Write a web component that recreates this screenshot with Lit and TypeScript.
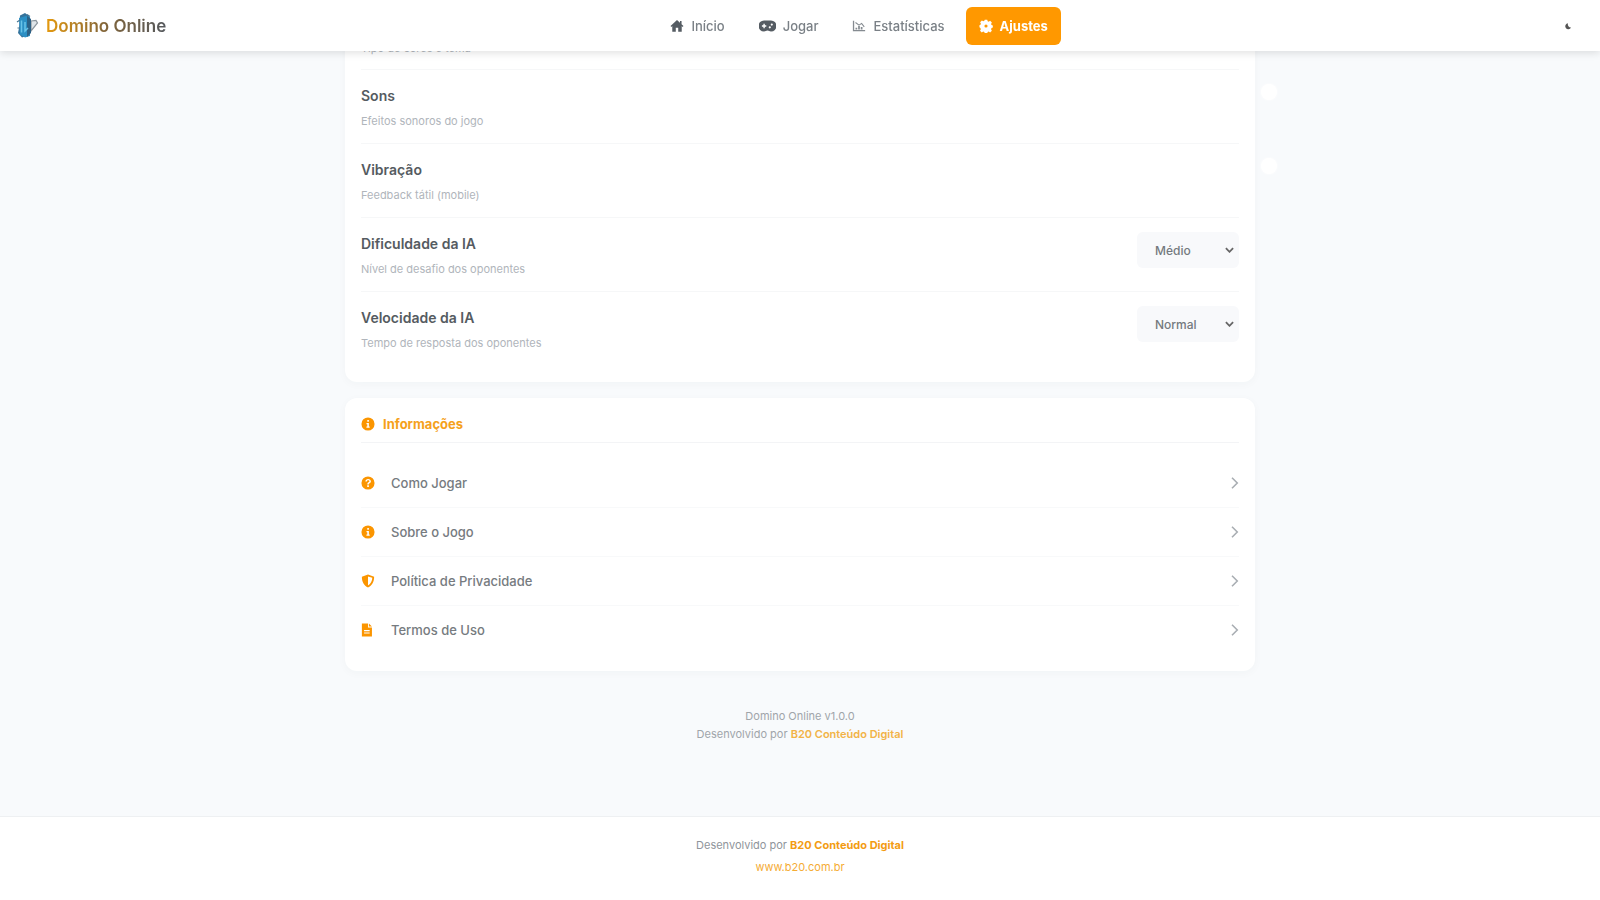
import { LitElement, html, css, svg } from "lit";
import { customElement, state } from "lit/decorators.js";

const icons = {
  home: svg`<path d="M8 1.2.6 7.9l1 1.1L2.6 8v6.6h4V10h2.8v4.6h4V8l1 1 1-1.1-2.2-2V2.4h-1.8v1.9z"/>`,
  gamepad: svg`<path fill-rule="evenodd" d="M4.500 2.500h7a5.500 5.500 0 0 1 0 11c-1.600 0-2-1-3.500-1s-1.900 1-3.500 1a5.500 5.500 0 0 1 0-11zM3.900 5.800v1.500H2.400v1.400h1.500v1.500h1.400V8.700h1.500V7.300H5.300V5.800zM10.300 8.200a1.100 1.100 0 1 0 0 2.200 1.100 1.100 0 0 0 0-2.200zm2-2.700a1.100 1.100 0 1 0 0 2.200 1.100 1.100 0 0 0 0-2.200z"/>`,
  chart: svg`<path d="M1 2h1.500v10.500H15V14H1zM4 10h2v2H4zm3-2h2v4H7zm3 1h2v3h-2z"/><path d="m4 4 4 3 3-2 3 4" fill="none" stroke="currentColor" stroke-width="1.200"/>`,
  gear: svg`<path fill-rule="evenodd" d="M6.600.8h2.800l.5 1.700 1.200.5 1.600-.9 2 2-.9 1.600.5 1.200 1.500.5v2.400l-1.500.6-.5 1.300.9 1.600-2 2-1.600-.9-1.200.5-.5 1.500H6.600l-.5-1.500-1.300-.5-1.600.9-2-2 .9-1.600-.5-1.300L.5 9.500V7l1.200-.5.5-1.200-.9-1.600 2-2 1.600.9 1.200-.5zM8 6.200a1.800 1.800 0 1 0 0 3.600 1.800 1.800 0 0 0 0-3.600z"/>`,
  info: svg`<path fill-rule="evenodd" d="M8 .5a7.500 7.500 0 1 0 0 15 7.500 7.500 0 0 0 0-15zM7.200 3.500h1.800v1.800H7.200zM6.300 6.800H9v4.100h.9v1.400H6.200v-1.400h1V8.200h-.9z"/>`,
  help: svg`<path fill-rule="evenodd" d="M8 .5a7.500 7.500 0 1 0 0 15 7.500 7.500 0 0 0 0-15zM5 6.200c.1-1.800 1.300-2.900 3.100-2.900 1.900 0 3.200 1.100 3.200 2.700 0 1.300-.7 1.900-1.500 2.400-.7.400-.9.600-.9 1.200H7.200c0-1.500.6-2.100 1.500-2.600.6-.400.900-.6.900-1.100 0-.6-.5-1-1.400-1s-1.400.5-1.500 1.300zM7.100 10.700h1.900v1.800H7.100z"/>`,
  shield: svg`<path fill-rule="evenodd" d="M8 .5 15 3c.1 5.500-2.300 10-7 12.500C3.300 13 .9 8.500 1 3zm0 2.300v10.300c3.300-2 4.800-5 4.900-8.700z"/>`,
  file: svg`<path fill-rule="evenodd" d="M1 .5h7V5h4.500v10.500H1zM9 .5 12.500 4H9zM3.500 8v1.300h6.400V8zm0 2.800v1.300h6.400v-1.300z"/>`,
  chevron: svg`<path d="m8 2 6 6-6 6" fill="none" stroke="currentColor" stroke-width="1.800"/>`,
  moon: svg`<path d="M8 2.500a6 6 0 1 0 6 8.500A6.500 6.500 0 0 1 8 2.500z"/>`,
};

const icon = (name: keyof typeof icons, cls = "icon") =>
  html`<svg class=${cls} viewBox="0 0 16 16" fill="currentColor" aria-hidden="true">${icons[name]}</svg>`;

const navItems = [
  { label: "Início", icon: "home" },
  { label: "Jogar", icon: "gamepad" },
  { label: "Estatísticas", icon: "chart" },
  { label: "Ajustes", icon: "gear", active: true },
] as const;

const infoLinks = [
  { label: "Como Jogar", icon: "help" },
  { label: "Sobre o Jogo", icon: "info" },
  { label: "Política de Privacidade", icon: "shield" },
  { label: "Termos de Uso", icon: "file" },
] as const;

@customElement("app-root")
export class AppRoot extends LitElement {
  @state() private sound = true;
  @state() private vibration = true;

  static styles = css`
    :host {
      display: flex;
      flex-direction: column;
      min-height: 100vh;
      background: #f8fafc;
      color: #4b5157;
      font-family: Inter, "Liberation Sans", sans-serif;
      font-size: 14px;
    }
    * { box-sizing: border-box; }
    a { color: inherit; text-decoration: none; }
    p, h2 { margin: 0; }
    .icon { width: 14px; height: 14px; flex: none; }
    header {
      position: fixed;
      inset: 0 0 auto;
      z-index: 2;
      display: flex;
      align-items: center;
      justify-content: space-between;
      height: 51px;
      padding: 0 16px;
      background: #fff;
      box-shadow: 0 2px 8px rgba(0, 0, 0, 0.12);
    }
    .brand { display: flex; align-items: center; gap: 6px; font-size: 17px; font-weight: 600; }
    .logo { width: 24px; height: 28px; }
    .brand-name {
      background: linear-gradient(90deg, #e59a10, #80643a 50%, #55595e);
      background-clip: text;
      -webkit-background-clip: text;
      color: transparent;
    }
    nav { display: flex; gap: 8px; }
    .nav-link {
      display: flex;
      align-items: center;
      gap: 7px;
      height: 38px;
      padding: 0 13px;
      border-radius: 6px;
      color: #7a8086;
      font-size: 13px;
      font-weight: 500;
    }
    .nav-link .icon { color: #555c63; }
    .icon.gamepad { width: 17px; height: 16px; }
    .nav-link .icon.chart { color: #858b91; }
    .nav-link.active { background: #ff9800; color: #fff; font-weight: 700; }
    .nav-link.active .icon { color: #fff; }
    .theme {
      display: grid;
      place-items: center;
      width: 32px;
      height: 32px;
      padding: 0;
      border: 0;
      background: none;
      color: #555;
    }
    .moon { width: 8px; height: 10px; }
    main { width: 100%; max-width: 942px; margin: 0 auto; padding: 0 16px; flex: 1; }
    .card {
      margin-bottom: 16px;
      padding: 16px;
      border-radius: 12px;
      background: #fff;
      box-shadow: 0 2px 10px rgba(30, 50, 70, 0.03);
    }
    .game { padding-top: 0; }
    .row {
      position: relative;
      display: flex;
      justify-content: space-between;
      align-items: flex-start;
      padding: 14px 0 13px;
      border-bottom: 1px solid #f6f7f8;
    }
    .row:first-child { padding: 13px 0 12px; }
    .row:last-child, .links li:last-child { border-bottom-color: transparent; }
    .label { display: block; line-height: 24px; font-weight: 600; color: #555b61; }
    .desc { margin-top: 4px; font-size: 11px; line-height: 18px; color: #b0b5bb; }
    select {
      appearance: none;
      width: 102px;
      height: 36px;
      padding: 0 18px;
      border: 0;
      border-radius: 6px;
      background: #f8f9fb
        url("data:image/svg+xml,%3Csvg xmlns='http://www.w3.org/2000/svg' viewBox='0 0 10 6'%3E%3Cpath d='m1 1 4 4 4-4' fill='none' stroke='%23666' stroke-width='2'/%3E%3C/svg%3E")
        no-repeat right 5px center / 9px 6px;
      color: #74797e;
      font: 500 12px Inter, sans-serif;
    }
    .toggle {
      appearance: none;
      position: absolute;
      right: -38px;
      top: 14px;
      width: 16px;
      height: 16px;
      margin: 0;
      border-radius: 50%;
      background: #fff;
      box-shadow: 0 0 3px #fff;
    }
    .title {
      display: flex;
      align-items: center;
      gap: 8px;
      margin-bottom: 16px;
      padding-bottom: 8px;
      border-bottom: 1px solid #f3f4f6;
      color: #f5a11c;
      font-size: 13px;
      line-height: 20px;
      font-weight: 700;
    }
    .title .icon, .links .icon { color: #fb9500; }
    .links { margin: 0; padding: 0; list-style: none; }
    .links li { border-bottom: 1px solid #f8f9fa; }
    .links a {
      display: flex;
      align-items: center;
      gap: 16px;
      height: 48px;
      color: #767b80;
      font-size: 13px;
      font-weight: 500;
    }
    .links .chevron { width: 14px; height: 14px; margin-left: auto; color: #a8adb2; }
    .about { padding: 20px 0 24px; text-align: center; font-size: 11px; line-height: 18px; color: #a0a5aa; }
    .about a { color: #f2b347; font-weight: 600; }
    footer {
      padding: 17px 16px 22px;
      border-top: 1px solid #eef0f2;
      background: #fff;
      text-align: center;
      font-size: 11px;
      line-height: 22px;
      color: #8f959b;
    }
    footer a { color: #f5ac35; }
    footer .strong { color: #f39c12; font-weight: 700; }
  `;

  render() {
    return html`
      <header>
        <a class="brand" href="#">
          <svg class="logo" viewBox="0 0 24 28" aria-hidden="true">
            <path d="M15 9l5-.5 1.500 2.500-6.500 8z" fill="#dfe5e9" stroke="#8b959d" stroke-width="1.200"/>
            <path d="M4 3.500 9 1l4 3-3 20-4 1.500L2 21l1-5z" fill="#36739b"/>
            <path d="M3 6l7-2 4 1v19l-5 1.500-5-3z" fill="#2b8fc4"/>
            <path d="M11 4l4 3v14l-4 4z" fill="#2c6186"/>
            <path d="M5.500 8.500v12M9 10v9l3-3" fill="none" stroke="#68c3e8" stroke-width="1.500"/>
            <path d="M1 10l3-2M1.500 16H4M11 2.500l3 2" stroke="#477692" stroke-width="1.200"/>
          </svg>
          <span class="brand-name">Domino Online</span>
        </a>
        <nav>
          ${navItems.map((n) => html`
            <a class="nav-link ${"active" in n ? "active" : ""}" href="#">${icon(n.icon, `icon ${n.icon}`)}${n.label}</a>`)}
        </nav>
        <button class="theme" type="button" aria-label="Tema">${icon("moon", "moon")}</button>
      </header>
      <main>
        <section class="card game">
          <div class="row"><div><p class="desc">&nbsp;</p><p class="desc">Tipo de cores e tema</p></div></div>
          <div class="row">
            <div><label class="label" for="sound">Sons</label><p class="desc">Efeitos sonoros do jogo</p></div>
            <input class="toggle" id="sound" type="checkbox" .checked=${this.sound}
              @change=${() => (this.sound = !this.sound)} />
          </div>
          <div class="row">
            <div><label class="label" for="vibration">Vibração</label><p class="desc">Feedback tátil (mobile)</p></div>
            <input class="toggle" id="vibration" type="checkbox" .checked=${this.vibration}
              @change=${() => (this.vibration = !this.vibration)} />
          </div>
          <div class="row">
            <div><label class="label" for="level">Dificuldade da IA</label><p class="desc">Nível de desafio dos oponentes</p></div>
            <select id="level"><option>Fácil</option><option selected>Médio</option><option>Difícil</option></select>
          </div>
          <div class="row">
            <div><label class="label" for="speed">Velocidade da IA</label><p class="desc">Tempo de resposta dos oponentes</p></div>
            <select id="speed"><option>Lenta</option><option selected>Normal</option><option>Rápida</option></select>
          </div>
        </section>
        <section class="card">
          <h2 class="title">${icon("info")}Informações</h2>
          <ul class="links">
            ${infoLinks.map((l) => html`
              <li><a href="#">${icon(l.icon)}<span>${l.label}</span>${icon("chevron", "chevron")}</a></li>`)}
          </ul>
        </section>
        <div class="about">
          <p>Domino Online v1.0.0</p>
          <p>Desenvolvido por <a href="#">B20 Conteúdo Digital</a></p>
        </div>
      </main>
      <footer>
        <p>Desenvolvido por <a class="strong" href="#">B20 Conteúdo Digital</a></p>
        <p><a href="#">www.b20.com.br</a></p>
      </footer>
    `;
  }
}
